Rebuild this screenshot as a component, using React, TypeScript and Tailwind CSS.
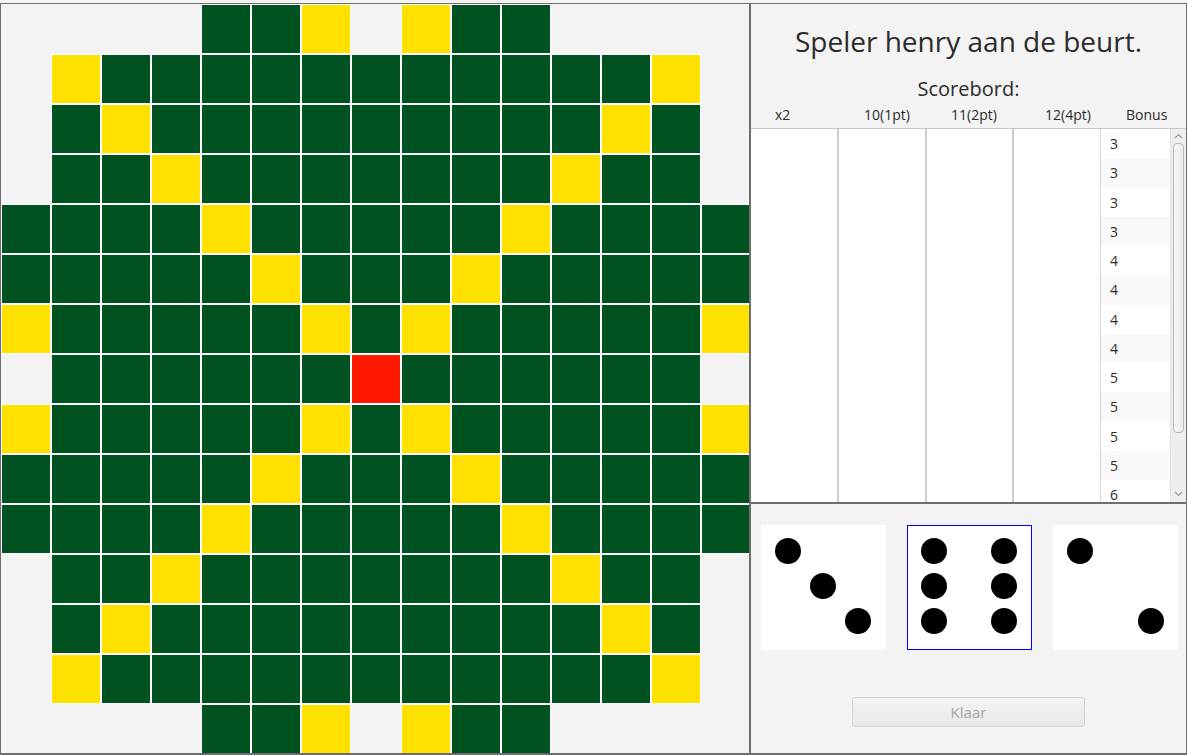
import React from "react";

// 15x15 board: "." leeg, "g" groen, "y" geel, "r" rood
function cellKind(r: number, c: number): string {
  const edge = r === 0 || r === 14;
  const side = c === 0 || c === 14;
  if (edge && side) return ".";
  if (edge && ![4, 5, 6, 8, 9, 10].includes(c)) return ".";
  if (side && ![4, 5, 6, 8, 9, 10].includes(r)) return ".";
  if (r === 7 && c === 7) return "r";
  if ((r === 0 || r === 14) && (c === 6 || c === 8)) return "y";
  if ((c === 0 || c === 14) && (r === 6 || r === 8)) return "y";
  if ((r === 6 || r === 8) && (c === 6 || c === 8)) return "y";
  if (r !== 7 && r >= 1 && r <= 13 && (c === r || c === 14 - r)) return "y";
  return "g";
}

const rows = Array.from({ length: 15 }, (_, r) => Array.from({ length: 15 }, (_, c) => cellKind(r, c)));

const bonus = [3, 3, 3, 3, 4, 4, 4, 4, 5, 5, 5, 5, 6];

const dice: { pips: [number, number][]; selected?: boolean }[] = [
  { pips: [[27, 26], [62, 61], [97, 96]] },
  { pips: [[27, 26], [97, 26], [27, 61], [97, 61], [27, 96], [97, 96]], selected: true },
  { pips: [[27, 26], [98, 96]] },
];

function Board() {
  return (
    <div className="w-[748px] h-[749px] overflow-hidden">
      <div className="grid grid-cols-[repeat(15,50px)] grid-rows-[repeat(15,50px)]">
        {rows.flatMap((row, r) =>
          row.map((k, c) => (
            <div
              key={`${r}-${c}`}
              className={
                k === "."
                  ? "w-[50px] h-[50px]"
                  : k === "g"
                  ? "w-[50px] h-[50px] border border-white bg-[#005220]"
                  : k === "y"
                  ? "w-[50px] h-[50px] border border-white bg-[#ffe100]"
                  : "w-[50px] h-[50px] border border-white bg-[#ff1900]"
              }
            />
          ))
        )}
      </div>
    </div>
  );
}

function Die({ pips, selected }: { pips: [number, number][]; selected?: boolean }) {
  return (
    <div className="relative w-[125px] h-[125px] bg-white">
      <svg width="125" height="125" viewBox="0 0 125 125">
        {pips.map(([x, y], i) => (
          <circle key={i} cx={x} cy={y} r="13" fill="#000" />
        ))}
      </svg>
      {selected && <div className="absolute inset-0 border border-[#0000ff]" />}
    </div>
  );
}

export default function App() {
  return (
    <div className="w-[1187px] h-[755px] bg-[#f3f3f3] pt-[3px] font-['Open_Sans',sans-serif] text-[#2b2b2b]">
      <div className="flex h-[752px] border-t border-l border-r border-b-2 border-[#6e6e6e]">
        <Board />
        <div className="w-[2px] bg-[#6e6e6e]" />

        {/* Rechterpaneel */}
        <div className="flex-1 flex flex-col">
          <div className="h-[124px] flex flex-col items-center">
            <div className="mt-[19px] text-[28px] leading-[36px]">Speler henry aan de beurt.</div>
            <div className="mt-[17px] text-[20px] leading-[26px]">Scorebord:</div>
            <div className="self-stretch mt-[3px] flex pl-[24px] text-[14px] leading-[20px]">
              <div className="w-[89px]">x2</div>
              <div className="w-[87px]">10(1pt)</div>
              <div className="w-[94px]">11(2pt)</div>
              <div className="w-[81px]">12(4pt)</div>
              <div>Bonus</div>
            </div>
          </div>

          {/* Scorebord tabel */}
          <div className="h-[374px] border-t border-[#c8c8c8] flex">
            <div className="w-[86px] bg-white" />
            <div className="w-[2px] bg-[#cdcdcd]" />
            <div className="w-[86px] bg-white" />
            <div className="w-[2px] bg-[#cdcdcd]" />
            <div className="w-[85px] bg-white" />
            <div className="w-[2px] bg-[#cdcdcd]" />
            <div className="w-[86px] bg-white" />
            <div className="w-[1px] bg-[#d6d6d6]" />
            <div className="w-[69px] bg-white overflow-hidden">
              {bonus.map((b, i) => (
                <div
                  key={i}
                  className={
                    i % 2 === 0
                      ? "h-[29.25px] flex items-center pl-[9px] text-[14px] bg-white"
                      : "h-[29.25px] flex items-center pl-[9px] text-[14px] bg-[#f9f9f9]"
                  }
                >
                  {b}
                </div>
              ))}
            </div>
            <div className="w-[16px] bg-[#eeeeee] border-l border-[#e2e2e2] flex flex-col items-center">
              <div className="h-[14px] flex items-center justify-center">
                <svg width="9" height="6" viewBox="0 0 9 6">
                  <path d="M1 5 L4.5 1.5 L8 5" fill="none" stroke="#9a9a9a" strokeWidth="1.2" />
                </svg>
              </div>
              <div className="w-[11px] h-[290px] rounded-[4px] border border-[#b9b9b9] bg-linear-to-r from-[#f7f7f7] to-[#e9e9e9]" />
              <div className="flex-1" />
              <div className="h-[16px] flex items-center justify-center">
                <svg width="9" height="6" viewBox="0 0 9 6">
                  <path d="M1 1 L4.5 4.5 L8 1" fill="none" stroke="#9a9a9a" strokeWidth="1.2" />
                </svg>
              </div>
            </div>
          </div>

          <div className="h-[2px] bg-[#6e6e6e]" />

          {/* Dobbelstenen */}
          <div className="flex-1 flex flex-col">
            <div className="flex gap-[21px] pl-[10px] pt-[21px]">
              {dice.map((d, i) => (
                <Die key={i} pips={d.pips} selected={d.selected} />
              ))}
            </div>
            <button
              disabled
              className="mt-[47px] mx-auto w-[233px] h-[30px] rounded-[3px] border border-[#d4d4d4] bg-linear-to-b from-[#f4f4f4] to-[#e8e8e8] text-[15px] text-[#a6a6a6]"
            >
              Klaar
            </button>
          </div>
        </div>
      </div>
    </div>
  );
}
